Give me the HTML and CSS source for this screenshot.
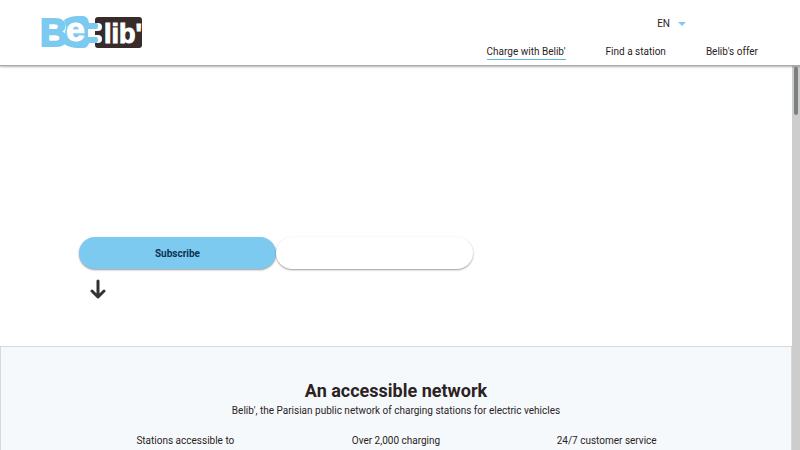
FILE: index.html
```html
<!DOCTYPE html>
<html lang="en">
<head>
    <meta charset="UTF-8">
    <meta name="viewport" content="width=device-width, initial-scale=1.0">
    <title>Belib' - Charge with Belib'</title>
    <link rel="stylesheet" href="styles.css">
</head>
<body>
    <header class="header">
        <a href="#" class="logo" aria-label="Belib' home">
            <svg width="100" height="32" viewBox="0 0 100 32">
                <path class="socket" d="M56 1h41q3 0 3 3v25q0 3-3 3H56q-3 0-3-3v-2h3q4 0 4-4t-4-4h-3v-4h3q4 0 4-4t-4-4h-3V4q0-3 3-3z"/>
                <path class="plug" d="M22 4q6-4 14-4h5q5 0 6 7h7q2 0 2 3t-2 3h-8v8h8q2 0 2 3t-2 3h-7q-1 5-6 5h-5q-8 0-14-4l2-6-1-6 1-5z"/>
                <text class="logo-b" x="-2" y="30">B</text>
                <text class="logo-e" x="24" y="25">e</text>
                <text class="logo-lib" x="62" y="27">lib'</text>
            </svg>
        </a>
        <div class="header-right">
            <button type="button" class="lang">EN <span class="caret"></span></button>
            <nav class="nav">
                <a href="#" class="active">Charge with Belib'</a>
                <a href="#">Find a station</a>
                <a href="#">Belib's offer</a>
            </nav>
        </div>
    </header>

    <div class="page">
        <main class="content">
            <section class="hero">
                <div class="hero-buttons">
                    <button type="button" class="btn btn-blue">Subscribe</button>
                    <button type="button" class="btn" aria-label="Find a station"></button>
                </div>
                <a href="#network" class="arrow" aria-label="Scroll down">
                    <svg width="16" height="20" viewBox="0 0 16 20">
                        <path d="M8 2v15M2 12l6 6 6-6"/>
                    </svg>
                </a>
            </section>
            <section class="network" id="network">
                <h2>An accessible network</h2>
                <p>Belib', the Parisian public network of charging stations for electric vehicles</p>
                <div class="features">
                    <div>Stations accessible to</div>
                    <div>Over 2,000 charging</div>
                    <div>24/7 customer service</div>
                </div>
            </section>
        </main>
        <div class="scrollbar"><div class="thumb"></div></div>
    </div>
</body>
</html>
```
FILE: styles.css
```css
* {
    box-sizing: border-box;
}
body {
    margin: 0;
    height: 100vh;
    display: flex;
    flex-direction: column;
    overflow: hidden;
    font-family: Roboto, sans-serif;
    font-size: 10px;
    line-height: 16px;
    color: #2b2323;
    background: #fff;
}
a {
    color: inherit;
    text-decoration: none;
}
button {
    font: inherit;
    color: inherit;
    border: 0;
    background: none;
    cursor: pointer;
}

/* header */
.header {
    position: relative;
    display: flex;
    justify-content: space-between;
    padding: 16px 42px 5px;
    border-bottom: 1px solid #aaa;
    box-shadow: 0 1px 2px rgba(0, 0, 0, 0.3);
}
.logo svg {
    display: block;
    overflow: visible;
}
.plug {
    fill: #7dcaf0;
}
.socket {
    fill: #382b2b;
}
.logo text {
    font-family: "Liberation Sans", Arial, sans-serif;
    font-weight: 700;
}
.logo-b {
    font-size: 38px;
    fill: #7dcaf0;
    stroke: #7dcaf0;
    stroke-width: 2px;
}
.logo-e {
    font-size: 34px;
    fill: #fff;
    stroke: #fff;
}
.logo-lib {
    font-size: 27px;
    fill: #fff;
    stroke: #fff;
}
.header-right {
    display: flex;
    flex-direction: column;
    align-items: flex-end;
    gap: 13px;
}
.lang {
    display: flex;
    align-items: center;
    gap: 8px;
    padding: 0;
    margin-right: 72px;
}
.caret {
    border: 4px solid transparent;
    border-top-color: #7dcaf0;
    border-bottom: 0;
}
.nav {
    display: flex;
    gap: 40px;
    line-height: 14px;
}
.nav a {
    border-bottom: 1px solid transparent;
}
.nav .active {
    border-color: #5db8e8;
}

/* page body */
.page {
    flex: 1;
    display: flex;
    min-height: 0;
}
.content {
    flex: 1;
    overflow: hidden;
}
.scrollbar {
    width: 8px;
    padding: 1px 2px;
    background: #cdcdcd;
}
.thumb {
    height: 48px;
    border-radius: 2px;
    background: #7b7f7f;
}
.hero {
    padding: 171px 79px 42px;
}
.hero-buttons {
    display: flex;
}
.btn {
    width: 197px;
    height: 32px;
    padding: 2px 0 0;
    border-radius: 16px;
    font-weight: 700;
    color: #0b3350;
    background: #fff;
    box-shadow: 0 1px 2px rgba(0, 0, 0, 0.4);
}
.btn-blue {
    background: #7dcaf0;
}
.arrow {
    display: inline-block;
    margin: 10px 11px 0;
}
.arrow svg {
    display: block;
    fill: none;
    stroke: #333;
    stroke-width: 3;
    stroke-linecap: round;
    stroke-linejoin: round;
}
.network {
    padding: 32px 79px;
    text-align: center;
    background: #f5f9fc;
    border: 1px solid #d5dade;
}
.network h2 {
    margin: 0;
    font-size: 18px;
    line-height: 24px;
}
.network p {
    margin: 0 0 14px;
}
.features {
    display: grid;
    grid-template-columns: repeat(3, 1fr);
}
```
